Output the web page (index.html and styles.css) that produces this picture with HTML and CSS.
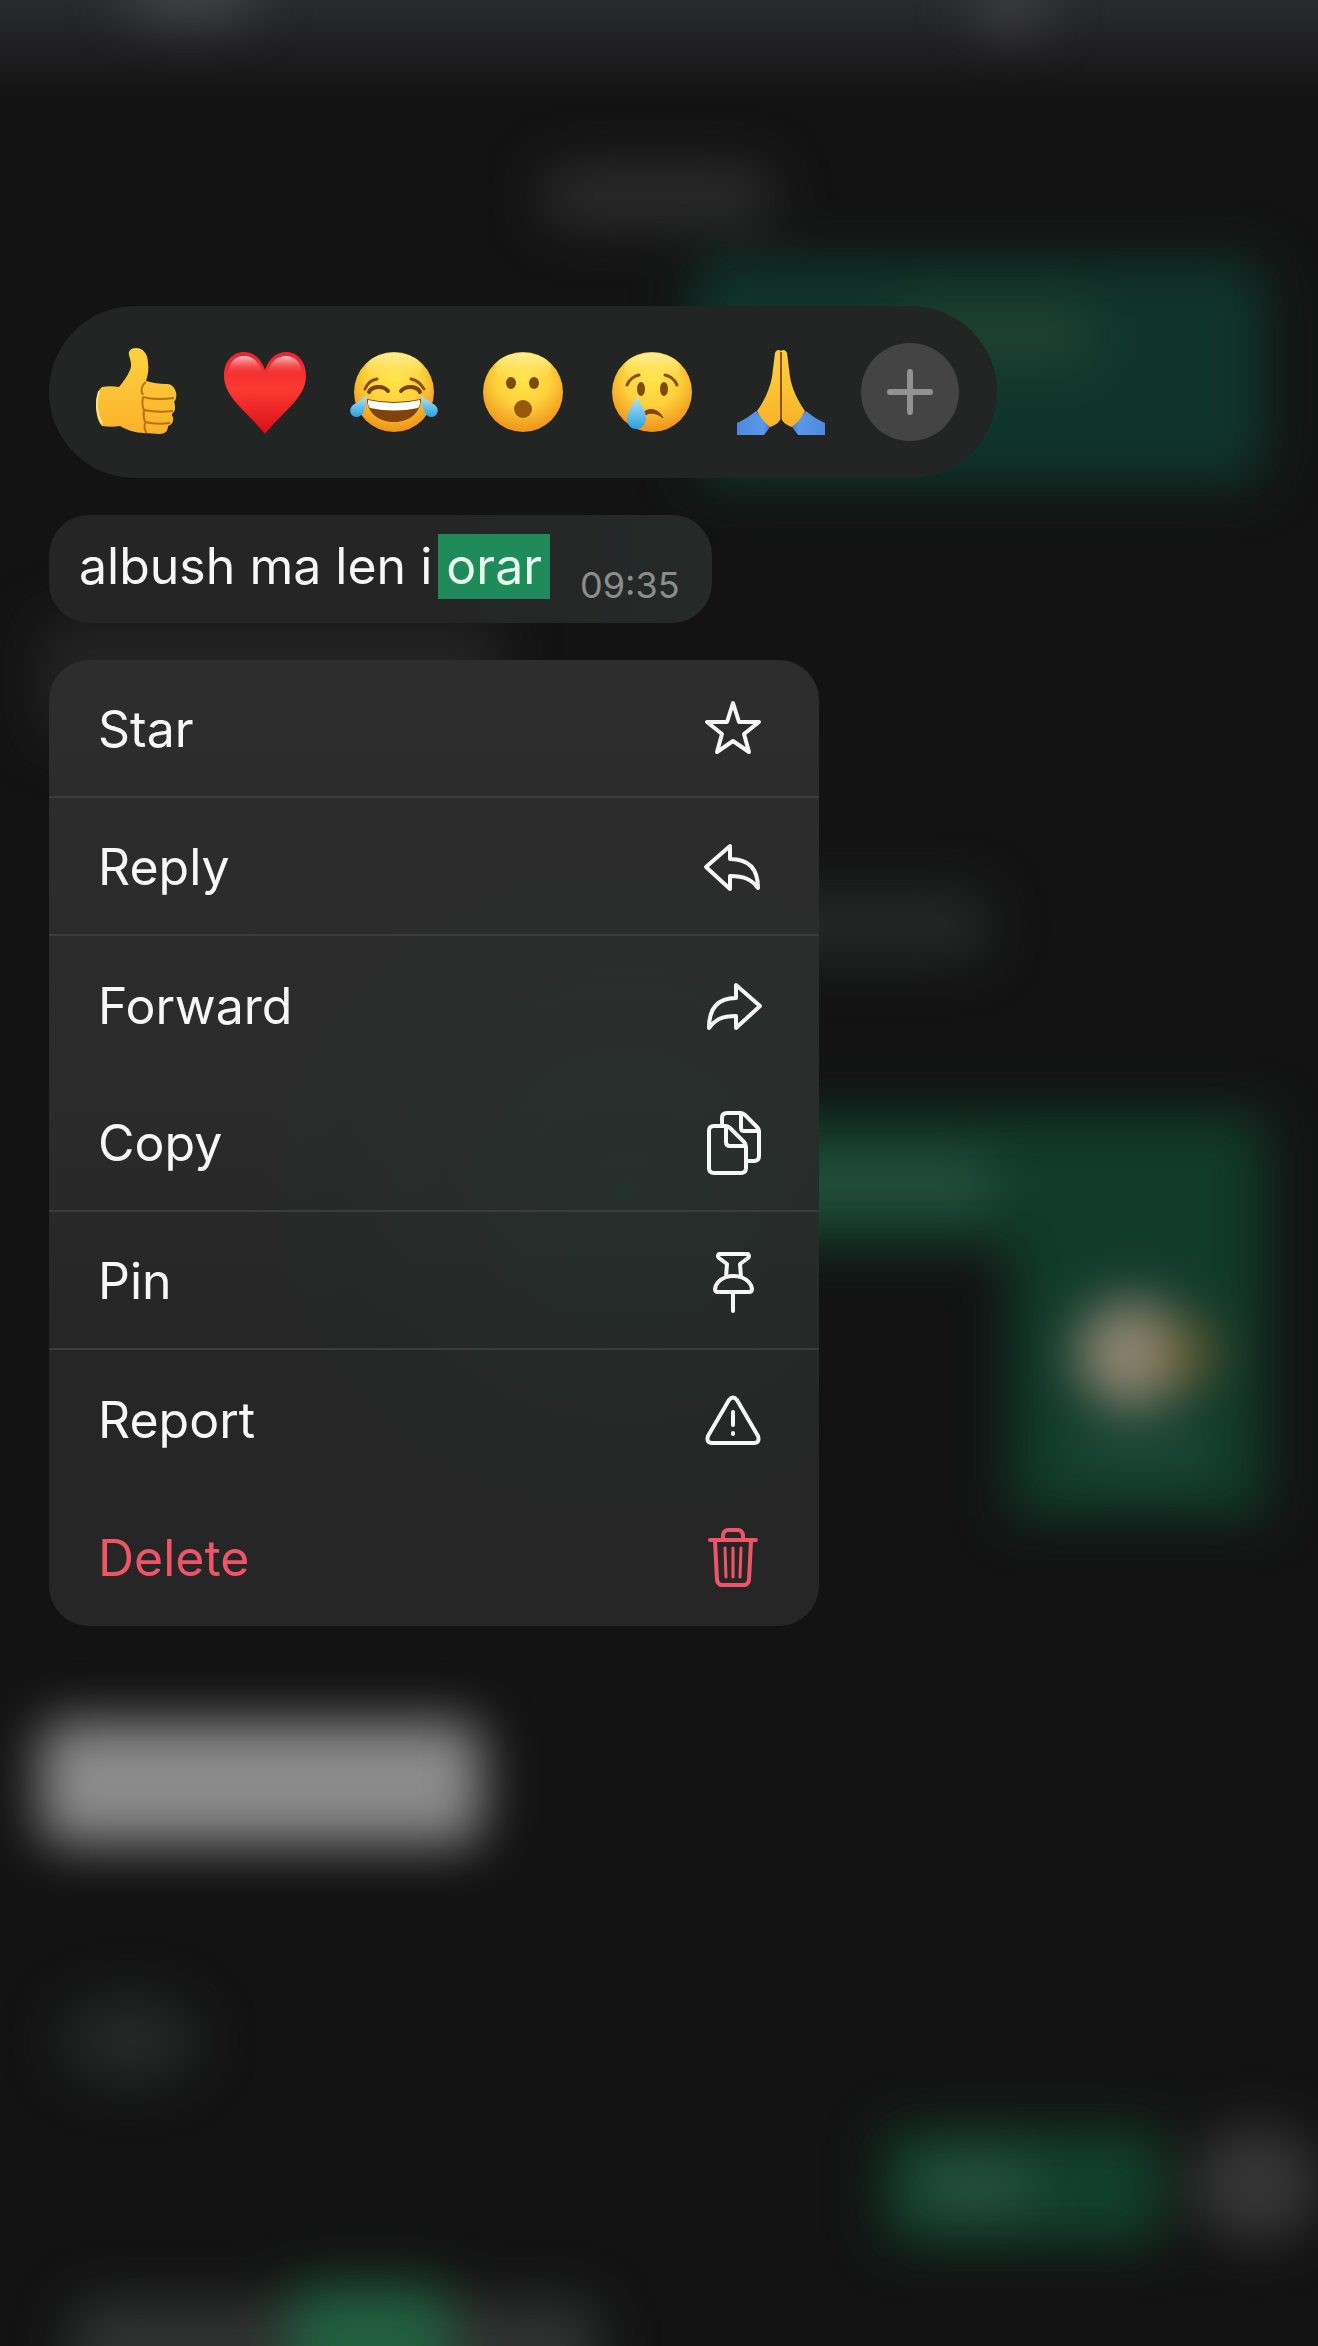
FILE: index.html
```
<!DOCTYPE html>
<html lang="en">
<head>
    <meta charset="UTF-8">
    <meta name="viewport" content="width=device-width, initial-scale=1.0">
    <title>Chat</title>
    <link rel="stylesheet" href="styles.css">
</head>
<body>

    <!-- blurred chat behind the menu -->
    <svg class="backdrop" viewBox="0 0 1318 2346" preserveAspectRatio="xMidYMin slice" aria-hidden="true">
        <defs>
            <filter id="blur" filterUnits="userSpaceOnUse" x="-200" y="-200" width="1718" height="2746" color-interpolation-filters="sRGB">
                <feGaussianBlur stdDeviation="26"/>
            </filter>
            <linearGradient id="header" x1="0" y1="0" x2="0" y2="1">
                <stop offset="0" stop-color="#2a2b2d"/>
                <stop offset="0.5" stop-color="#1f1f21"/>
                <stop offset="1" stop-color="#131313"/>
            </linearGradient>
        </defs>
        <rect width="1318" height="2346" fill="#131313"/>
        <rect width="1318" height="100" fill="url(#header)"/>
        <g filter="url(#blur)">
            <ellipse cx="190" cy="-10" rx="70" ry="30" fill="#454648"/>
            <ellipse cx="1010" cy="0" rx="40" ry="30" fill="#404043"/>
            <rect x="540" y="165" width="235" height="62" rx="30" fill="#2c2c2c"/>
            <rect x="692" y="258" width="575" height="228" rx="30" fill="#10352a"/>
            <rect x="900" y="305" width="190" height="60" fill="#1f4233"/>
            <rect x="40" y="620" width="460" height="120" fill="#242424"/>
            <rect x="500" y="890" width="490" height="70" rx="30" fill="#262928"/>
            <path d="M400 1114H1266V1518H1010V1246H400z" fill="#113b2b"/>
            <rect x="400" y="1160" width="590" height="50" fill="#28523f"/>
            <rect x="1070" y="1430" width="140" height="40" fill="#1f4a38"/>
            <ellipse cx="1132" cy="1354" rx="56" ry="54" fill="#8f8672"/>
            <ellipse cx="1190" cy="1354" rx="26" ry="34" fill="#67582c"/>
            <rect x="40" y="1722" width="442" height="122" rx="20" fill="#8c8c8c"/>
            <ellipse cx="130" cy="2040" rx="70" ry="44" fill="#262928"/>
            <rect x="884" y="2130" width="280" height="114" rx="20" fill="#12402c"/>
            <rect x="920" y="2160" width="110" height="50" fill="#285440"/>
            <ellipse cx="1256" cy="2184" rx="66" ry="58" fill="#363636"/>
            <rect x="70" y="2300" width="530" height="110" rx="30" fill="#303332"/>
            <rect x="290" y="2285" width="160" height="130" rx="20" fill="#226040"/>
        </g>
    </svg>

    <!-- shared gradients -->
    <svg class="defs" width="0" height="0" aria-hidden="true">
        <defs>
            <radialGradient id="face" cx="0.5" cy="0.32" r="0.7">
                <stop offset="0" stop-color="#ffe64a"/>
                <stop offset="0.5" stop-color="#fdd03c"/>
                <stop offset="1" stop-color="#ee8f18"/>
            </radialGradient>
            <linearGradient id="shine" x1="0" y1="0" x2="0" y2="1">
                <stop offset="0" stop-color="#fff6b0" stop-opacity="0.8"/>
                <stop offset="1" stop-color="#ffe04a" stop-opacity="0"/>
            </linearGradient>
            <linearGradient id="tear" x1="0" y1="0" x2="0" y2="1">
                <stop offset="0" stop-color="#b5e6fb"/>
                <stop offset="1" stop-color="#2b9fe0"/>
            </linearGradient>
            <linearGradient id="skin" x1="0" y1="0" x2="0" y2="1">
                <stop offset="0" stop-color="#ffd23f"/>
                <stop offset="1" stop-color="#f9b22b"/>
            </linearGradient>
            <linearGradient id="heart" x1="0" y1="0" x2="0" y2="1">
                <stop offset="0" stop-color="#e8242e"/>
                <stop offset="0.45" stop-color="#fc3a32"/>
                <stop offset="1" stop-color="#d80f17"/>
            </linearGradient>
            <linearGradient id="gloss" x1="0" y1="0" x2="0" y2="1">
                <stop offset="0" stop-color="#ffc5c5"/>
                <stop offset="1" stop-color="#fb3a38" stop-opacity="0"/>
            </linearGradient>
            <linearGradient id="sleeve" x1="0" y1="0" x2="1" y2="0">
                <stop offset="0" stop-color="#4d8ade"/>
                <stop offset="0.3" stop-color="#5b98e8"/>
                <stop offset="0.5" stop-color="#1f4ba0"/>
                <stop offset="0.7" stop-color="#5b98e8"/>
                <stop offset="1" stop-color="#4d8ade"/>
            </linearGradient>
        </defs>
    </svg>

    <main class="overlay">
        <div class="reactions">
            <button type="button" class="reaction" aria-label="Thumbs up">
                <svg viewBox="0 0 98 98">
                    <path d="M49 5c-5 0-8 3-7 7 2 7 3 11 1 15-3 7-7 12-11 17-6-1-12-1-17 0-4 3-6 10-6 18 0 9 2 17 6 21 6 1 12 1 18 0 7 4 15 7 24 7l16 1c6 0 8-4 8-8 4-1 6-5 5-9-1-1-1-2-1-3 3-2 4-7 2-12 3-3 3-9 1-12-2-5-5-6-9-6-7 0-13-1-20-3 2-6 3-12 2-18C61 11 56 5 49 5z" fill="url(#skin)"/>
                    <path d="M59 39c-4 3-6 8-3 13M56 54c-1 5-1 9 1 13M57 67c-1 5 0 9 1 12M58 80c-1 4 0 8 2 10M56 54c10 3 22 2 31 1M57 67c10 2 20 2 29 1M58 79c8 2 18 2 25 1" fill="none" stroke="#b77213" stroke-width="2"/>
                    <path d="M12 48c-3 10-3 22 3 33" fill="none" stroke="#ffe58a" stroke-width="2"/>
                </svg>
            </button>
            <button type="button" class="reaction" aria-label="Love">
                <svg viewBox="0 0 98 98">
                    <path d="M49 27C45 15 37 9 28 9 16 9 8 19 8 33c0 22 25 37 41 58 16-21 41-36 41-58C90 19 82 9 70 9c-9 0-17 6-21 18z" fill="url(#heart)"/>
                    <path d="M12 32c0-12 7-19 16-19s16 6 19 19zM51 32c3-13 10-19 19-19s16 7 16 19z" fill="url(#gloss)"/>
                </svg>
            </button>
            <button type="button" class="reaction" aria-label="Laugh">
                <svg viewBox="0 0 98 98">
                    <circle cx="49" cy="49" r="40" fill="url(#face)"/>
                    <ellipse cx="49" cy="25" rx="28" ry="15" fill="url(#shine)"/>
                    <path d="M20 46c2-5 6-9 12-10M66 36c6 1 10 5 13 10" fill="none" stroke="#8a4f0b" stroke-width="3" stroke-linecap="round"/>
                    <path d="M24 49c3-6 14-7 19-1M56 48c5-6 16-5 19 1" fill="none" stroke="#7a430a" stroke-width="4" stroke-linecap="round"/>
                    <path d="M22 56q27 6 54 0c0 13-11 23-27 23S22 69 22 56z" fill="#80440b"/>
                    <path d="M23 57q26 6 52 0c0 4 0 6-2 8q-24 5-48 0c-2-2-2-4-2-8z" fill="#fff"/>
                    <path d="M22 52c-1 9-2 21-10 22-7 0-9-8-4-12 4-3 9-5 14-10zM76 52c1 9 2 21 10 22 7 0 9-8 4-12-4-3-9-5-14-10z" fill="url(#tear)"/>
                </svg>
            </button>
            <button type="button" class="reaction" aria-label="Wow">
                <svg viewBox="0 0 98 98">
                    <circle cx="49" cy="49" r="40" fill="url(#face)"/>
                    <ellipse cx="49" cy="25" rx="28" ry="15" fill="url(#shine)"/>
                    <ellipse cx="37" cy="40" rx="5" ry="6" fill="#804a0c"/>
                    <ellipse cx="60" cy="40" rx="5" ry="6" fill="#804a0c"/>
                    <ellipse cx="49" cy="66" rx="9" ry="9" fill="#96590a"/>
                </svg>
            </button>
            <button type="button" class="reaction" aria-label="Sad">
                <svg viewBox="0 0 98 98">
                    <circle cx="49" cy="49" r="40" fill="url(#face)"/>
                    <ellipse cx="49" cy="25" rx="28" ry="15" fill="url(#shine)"/>
                    <path d="M24 42c2-5 7-9 12-10M62 32c5 1 10 5 12 10" fill="none" stroke="#8a4f0b" stroke-width="3" stroke-linecap="round"/>
                    <ellipse cx="38" cy="46" rx="4" ry="7" fill="#804a0c"/>
                    <ellipse cx="61" cy="46" rx="4" ry="7" fill="#804a0c"/>
                    <path d="M40 70c6-6 16-4 20 5-6-5-12-6-18-3z" fill="#80440b" stroke="#80440b" stroke-width="1"/>
                    <path d="M34 53c3 9 9 14 9 22 0 6-4 11-10 11s-9-5-9-11c0-8 7-13 10-22z" fill="url(#tear)"/>
                </svg>
            </button>
            <button type="button" class="reaction" aria-label="Thanks">
                <svg viewBox="0 0 98 98">
                    <path d="M5 92V80c7-3 13-7 19-12l14 16-6 8zM93 92V80c-7-3-13-7-19-12L60 84l6 8z" fill="url(#sleeve)"/>
                    <path d="M49 8c-2-2-5-1-6 2l-3 24c-2 11-7 23-15 34 3 6 7 11 13 16 6-2 10-5 11-10z" fill="url(#skin)"/>
                    <path d="M49 8c2-2 5-1 6 2l3 24c2 11 7 23 15 34-3 6-7 11-13 16-6-2-10-5-11-10z" fill="url(#skin)"/>
                    <path d="M49 9v67" stroke="#8f5009" stroke-width="2"/>
                </svg>
            </button>
            <button type="button" class="reaction more" aria-label="More reactions">
                <svg viewBox="0 0 98 98">
                    <path d="M49 29v40M29 49h40" stroke="#929292" stroke-width="6" stroke-linecap="round"/>
                </svg>
            </button>
        </div>

        <div class="bubble">
            <p class="message">albush ma len i <mark>orar</mark></p>
            <time class="time">09:35</time>
        </div>

        <div class="menu">
            <button type="button" class="item divided">
                Star
                <svg class="icon" viewBox="0 0 64 64"><path d="M32 6l6 19h20L43 37l5 18-16-11-16 11 5-18L6 25h20z"/></svg>
            </button>
            <button type="button" class="item divided">
                Reply
                <svg class="icon" viewBox="0 0 64 64"><path d="M5 32L29 11v13c18 0 28 9 28 29-6-8-13-12-28-12v13z"/></svg>
            </button>
            <button type="button" class="item">
                Forward
                <svg class="icon" viewBox="0 0 64 64"><path d="M59 32L35 11v13C17 24 8 34 8 54c6-8 12-12 27-12v12z"/></svg>
            </button>
            <button type="button" class="item divided">
                Copy
                <svg class="icon" viewBox="0 0 64 64"><path d="M21 15V7q0-5 5-5h14q2 0 4 2l12 12q2 2 2 4v25q0 5-5 5h-8M40 3v14q0 3 3 3h14M13 15h12q2 0 4 2l14 14q2 2 2 5v21q0 5-5 5H13q-5 0-5-5V20q0-5 5-5zM25 16v15q0 4 4 4h15"/></svg>
            </button>
            <button type="button" class="item divided">
                Pin
                <svg class="icon" viewBox="0 0 64 64"><path d="M18 5h29q2 2 0 4l-8 6 1 13q10 4 11 12 0 3-3 3H17q-3 0-3-3 1-8 11-12l1-13-8-6q-2-2 0-4zM25 28q7-2 15 0M32 44v18"/></svg>
            </button>
            <button type="button" class="item">
                Report
                <svg class="icon" viewBox="0 0 64 64"><path d="M28 12q4-5 8 0l21 36q2 7-4 7H11q-6 0-4-7zM32 24v13M32 45v1"/></svg>
            </button>
            <button type="button" class="item danger">
                Delete
                <svg class="icon" viewBox="0 0 64 64"><path d="M9 14h46M22 14V9q1-5 5-5h10q4 0 5 5v5M14 15l2 39q1 5 5 5h22q4 0 5-5l2-39"/><path class="thin" d="M24 22l1 29M32 22v29M40 22l-1 29"/></svg>
            </button>
        </div>
    </main>

</body>
</html>
```
FILE: styles.css
```
* {
    box-sizing: border-box;
}
body {
    margin: 0;
    min-height: 100vh;
    background-color: #131313;
    color: #f7f7f7;
    font-family: Inter, "Liberation Sans", sans-serif;
}
button {
    border: none;
    background: none;
    color: inherit;
    font: inherit;
    cursor: pointer;
}
.backdrop {
    position: fixed;
    inset: 0;
    width: 100%;
    height: 100%;
    z-index: -1;
}
.defs {
    position: absolute;
}
.overlay {
    display: flex;
    flex-direction: column;
    align-items: flex-start;
    gap: 37px;
    padding: 306px 49px 48px;
}

/* reaction bar */
.reactions {
    display: flex;
    align-items: center;
    gap: 31px;
    padding: 37px 38px;
    border-radius: 86px;
    background-color: #232424;
}
.reaction {
    width: 98px;
    height: 98px;
    padding: 0;
    border-radius: 50%;
}
.reaction svg {
    display: block;
    width: 100%;
}
.reaction.more {
    background-color: #444;
}

/* message */
.bubble {
    display: flex;
    align-items: flex-end;
    gap: 38px;
    padding: 19px 32px 20px 30px;
    border-radius: 40px;
    background: linear-gradient(90deg, #252525 60%, #252a29);
}
.message {
    margin: 0 0 4px;
    font-size: 50px;
    line-height: 65px;
}
.message mark {
    display: inline-block;
    margin: 0 -8px;
    padding: 0 8px;
    background-color: #1f8a5a;
    color: #e6fff0;
}
.time {
    color: #8c8e8e;
    font-size: 36px;
    line-height: 36px;
}

/* context menu */
.menu {
    width: 100%;
    max-width: 770px;
    border-radius: 40px;
    overflow: hidden;
    background:
        radial-gradient(ellipse at 75% 55%, rgba(34, 56, 48, 0.45), transparent 45%),
        linear-gradient(#2d2d2d, #2b2b2b 45%, #262626 70%);
}
.item {
    display: flex;
    align-items: center;
    justify-content: space-between;
    width: 100%;
    height: 138px;
    padding: 2px 54px 0 49px;
    font-size: 50px;
    text-align: left;
}
.item.divided {
    border-bottom: 2px solid #3b3c3c;
}
.item.danger {
    color: #ee5568;
}
.icon {
    width: 64px;
    height: 64px;
    fill: none;
    stroke: currentColor;
    stroke-width: 4;
    stroke-linecap: round;
    stroke-linejoin: round;
}
.icon .thin {
    stroke-width: 3;
}
```
